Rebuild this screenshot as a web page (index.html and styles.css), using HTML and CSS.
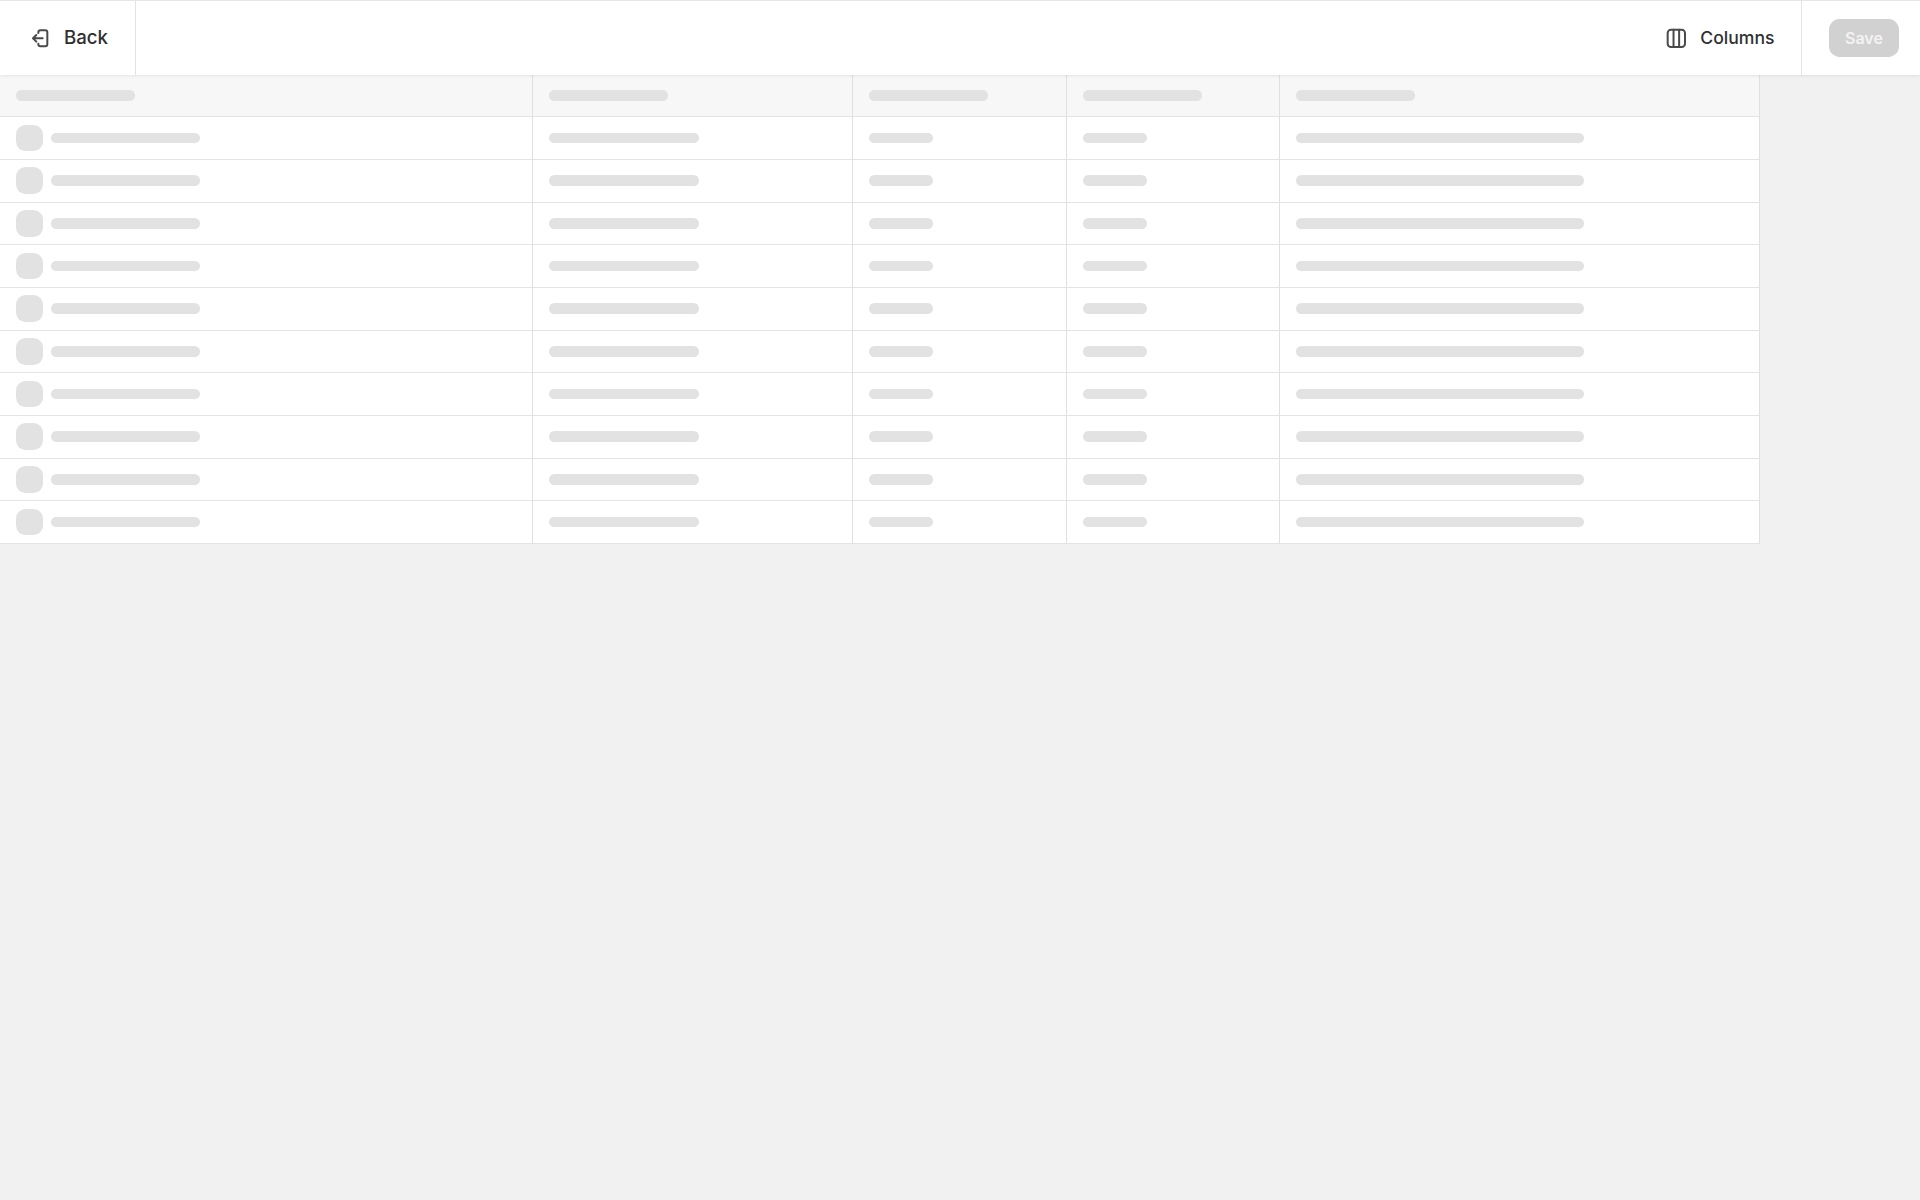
FILE: index.html
```html
<!DOCTYPE html>
<html lang="en">
<head>
  <meta charset="UTF-8">
  <title>Edit products</title>
  <link rel="stylesheet" href="styles.css">
</head>
<body>
  <header class="topbar">
    <a class="bar-action bar-action-back">
      <svg class="bar-icon" viewBox="0 0 20 20" fill="none" stroke="currentColor" stroke-width="1.5" stroke-linecap="round" stroke-linejoin="round">
        <path d="M8.5 6v-.5a1.5 1.5 0 0 1 1.5-1.5h3.75a1.5 1.5 0 0 1 1.5 1.5v9a1.5 1.5 0 0 1-1.5 1.5h-3.75a1.5 1.5 0 0 1-1.5-1.5v-.5"/>
        <path d="M11.75 10h-7M7 7.5 4.5 10 7 12.5"/>
      </svg>
      <span>Back</span>
    </a>
    <div class="topbar-right">
      <a class="bar-action bar-action-columns">
        <svg class="bar-icon" viewBox="0 0 20 20" fill="none" stroke="currentColor" stroke-width="1.5" stroke-linecap="round" stroke-linejoin="round">
          <rect x="3.5" y="3.5" width="13" height="13" rx="2.5"/>
          <path d="M7.9 3.5v13M12.1 3.5v13"/>
        </svg>
        <span>Columns</span>
      </a>
      <div class="save-wrap">
        <button class="save-button" disabled>Save</button>
      </div>
    </div>
  </header>

  <main class="sheet">
    <div class="sheet-row sheet-head">
      <div class="cell"><span class="bone bone-head"></span></div>
      <div class="cell"><span class="bone bone-head"></span></div>
      <div class="cell"><span class="bone bone-head"></span></div>
      <div class="cell"><span class="bone bone-head"></span></div>
      <div class="cell"><span class="bone bone-head"></span></div>
    </div>

    <div class="sheet-row">
      <div class="cell"><span class="thumb"></span><span class="bone bone-md"></span></div>
      <div class="cell"><span class="bone bone-md"></span></div>
      <div class="cell"><span class="bone bone-sm"></span></div>
      <div class="cell"><span class="bone bone-sm"></span></div>
      <div class="cell"><span class="bone bone-lg"></span></div>
    </div>
    <div class="sheet-row">
      <div class="cell"><span class="thumb"></span><span class="bone bone-md"></span></div>
      <div class="cell"><span class="bone bone-md"></span></div>
      <div class="cell"><span class="bone bone-sm"></span></div>
      <div class="cell"><span class="bone bone-sm"></span></div>
      <div class="cell"><span class="bone bone-lg"></span></div>
    </div>
    <div class="sheet-row">
      <div class="cell"><span class="thumb"></span><span class="bone bone-md"></span></div>
      <div class="cell"><span class="bone bone-md"></span></div>
      <div class="cell"><span class="bone bone-sm"></span></div>
      <div class="cell"><span class="bone bone-sm"></span></div>
      <div class="cell"><span class="bone bone-lg"></span></div>
    </div>
    <div class="sheet-row">
      <div class="cell"><span class="thumb"></span><span class="bone bone-md"></span></div>
      <div class="cell"><span class="bone bone-md"></span></div>
      <div class="cell"><span class="bone bone-sm"></span></div>
      <div class="cell"><span class="bone bone-sm"></span></div>
      <div class="cell"><span class="bone bone-lg"></span></div>
    </div>
    <div class="sheet-row">
      <div class="cell"><span class="thumb"></span><span class="bone bone-md"></span></div>
      <div class="cell"><span class="bone bone-md"></span></div>
      <div class="cell"><span class="bone bone-sm"></span></div>
      <div class="cell"><span class="bone bone-sm"></span></div>
      <div class="cell"><span class="bone bone-lg"></span></div>
    </div>
    <div class="sheet-row">
      <div class="cell"><span class="thumb"></span><span class="bone bone-md"></span></div>
      <div class="cell"><span class="bone bone-md"></span></div>
      <div class="cell"><span class="bone bone-sm"></span></div>
      <div class="cell"><span class="bone bone-sm"></span></div>
      <div class="cell"><span class="bone bone-lg"></span></div>
    </div>
    <div class="sheet-row">
      <div class="cell"><span class="thumb"></span><span class="bone bone-md"></span></div>
      <div class="cell"><span class="bone bone-md"></span></div>
      <div class="cell"><span class="bone bone-sm"></span></div>
      <div class="cell"><span class="bone bone-sm"></span></div>
      <div class="cell"><span class="bone bone-lg"></span></div>
    </div>
    <div class="sheet-row">
      <div class="cell"><span class="thumb"></span><span class="bone bone-md"></span></div>
      <div class="cell"><span class="bone bone-md"></span></div>
      <div class="cell"><span class="bone bone-sm"></span></div>
      <div class="cell"><span class="bone bone-sm"></span></div>
      <div class="cell"><span class="bone bone-lg"></span></div>
    </div>
    <div class="sheet-row">
      <div class="cell"><span class="thumb"></span><span class="bone bone-md"></span></div>
      <div class="cell"><span class="bone bone-md"></span></div>
      <div class="cell"><span class="bone bone-sm"></span></div>
      <div class="cell"><span class="bone bone-sm"></span></div>
      <div class="cell"><span class="bone bone-lg"></span></div>
    </div>
    <div class="sheet-row">
      <div class="cell"><span class="thumb"></span><span class="bone bone-md"></span></div>
      <div class="cell"><span class="bone bone-md"></span></div>
      <div class="cell"><span class="bone bone-sm"></span></div>
      <div class="cell"><span class="bone bone-sm"></span></div>
      <div class="cell"><span class="bone bone-lg"></span></div>
    </div>
  </main>
</body>
</html>
```

FILE: styles.css
```css
* {
  margin: 0;
  padding: 0;
  box-sizing: border-box;
}

html,
body {
  height: 100%;
}

body {
  font-family: 'Inter', 'Liberation Sans', sans-serif;
  background: #f1f1f1;
  color: #303030;
  overflow: hidden;
}

.topbar {
  position: relative;
  z-index: 2;
  display: flex;
  justify-content: space-between;
  height: 74.67px;
  background: #fff;
  border-top: 1.33px solid #e6e6e6;
  box-shadow: 0 1px 3px rgba(0, 0, 0, 0.08);
}

.topbar-right {
  display: flex;
}

.bar-action {
  display: flex;
  align-items: center;
  gap: 10.67px;
  padding: 0 26.67px;
  font-size: 17.6px;
  font-weight: 500;
  cursor: pointer;
}

.bar-action-back {
  border-right: 1px solid #e3e3e3;
  font-size: 18.67px;
  font-weight: 450;
}

.bar-action-columns {
  border-right: 1px solid #e3e3e3;
}

.bar-icon {
  width: 26.67px;
  height: 26.67px;
  flex: none;
  color: #4a4a4a;
}

.save-wrap {
  display: flex;
  align-items: center;
  padding: 0 21.33px 0 27px;
}

.save-button {
  width: 69.5px;
  height: 37.5px;
  border: 0;
  border-radius: 10.67px;
  background: #d1d1d1;
  color: #f3f3f3;
  font-family: inherit;
  font-size: 16px;
  font-weight: 600;
}

.sheet {
  width: 1760px;
}

.sheet-row {
  display: grid;
  grid-template-columns: 533.33px 320px 213.33px 213.33px 480px;
  height: 42.67px;
  background: #fff;
}

.sheet-head {
  background: #f7f7f7;
}

.cell {
  display: flex;
  align-items: center;
  gap: 8px;
  padding: 0 16px;
  border-right: 1px solid #e0e0e0;
  border-bottom: 1px solid #e3e3e3;
}

.bone {
  display: block;
  height: 10.67px;
  border-radius: 5.33px;
  background: #e2e2e2;
}

.bone-head {
  width: 119px;
}

.bone-sm {
  width: 64px;
}

.bone-md {
  width: 149.33px;
}

.bone-lg {
  width: 288px;
}

.thumb {
  flex: none;
  width: 26.67px;
  height: 26.67px;
  border-radius: 9.5px;
  background: #e2e2e2;
}
```
